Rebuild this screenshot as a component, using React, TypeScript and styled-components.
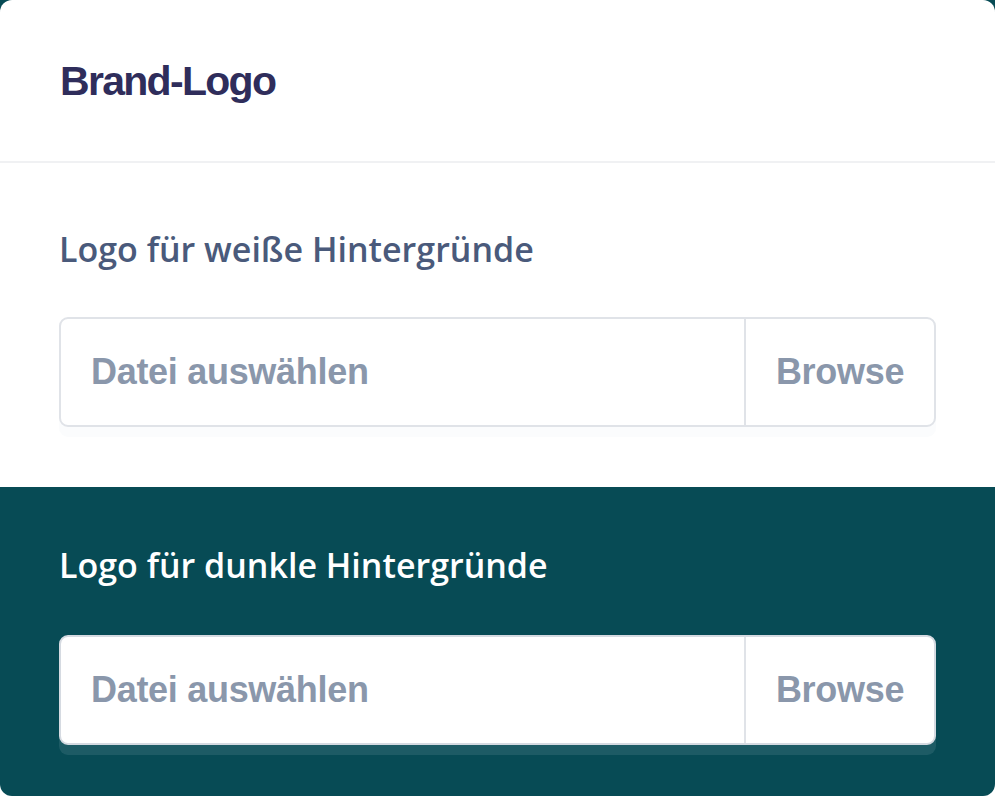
import React from 'react';
import styled, {createGlobalStyle} from "styled-components";

const GlobalStyle = createGlobalStyle`
  html, body {
    margin: 0;
    padding: 0;
  }

  body {
    background: linear-gradient(#074b55 50%, #ffffff 50%);
    min-height: 796px;
  }

  * {
    box-sizing: border-box;
  }
`

const Card = styled.div`
  width: 995px;
  height: 796px;
  border-radius: 12px;
  overflow: hidden;
  background-color: #ffffff;
  display: flex;
  flex-direction: column;
`

const Header = styled.header`
  height: 163px;
  padding-left: 60px;
  display: flex;
  align-items: center;
  border-bottom: 2px solid #f0f1f3;
`

const Title = styled.h1`
  margin: 0;
  padding-top: 2px;
  font-family: "Liberation Sans", Arial, sans-serif;
  font-weight: 700;
  font-size: 41px;
  letter-spacing: -1.7px;
  color: #2f2d5b;
`

const Section = styled.section<{ $dark?: boolean; $top: number; $bottom: number; $gap: number }>`
  display: flex;
  flex-direction: column;
  gap: ${p => p.$gap}px;
  padding: ${p => p.$top}px 59px ${p => p.$bottom}px 59px;
  background-color: ${p => p.$dark ? "#074b55" : "#ffffff"};
  flex: ${p => p.$dark ? 1 : "none"};
`

const Label = styled.div<{ $dark?: boolean }>`
  font-family: "Open Sans", "Noto Sans", sans-serif;
  font-weight: 600;
  font-size: 34px;
  line-height: 44px;
  color: ${p => p.$dark ? "#ffffff" : "#4a5a7b"};
`

const FileField = styled.div<{ $dark?: boolean }>`
  height: 110px;
  display: flex;
  background-color: #ffffff;
  border: 2px solid ${p => p.$dark ? "#d5dae1" : "#e0e3e8"};
  border-radius: 9px;
  box-shadow: 0 10px 0 rgba(190, 210, 220, ${p => p.$dark ? 0.12 : 0.06});
  font-family: "Liberation Sans", Arial, sans-serif;
  font-weight: 700;
  font-size: 36px;
  letter-spacing: -0.3px;
  color: #8a97ab;
`

const Placeholder = styled.div`
  flex: 1;
  display: flex;
  align-items: center;
  padding-left: 30px;
`

const BrowseButton = styled.div`
  width: 190px;
  display: flex;
  align-items: center;
  justify-content: center;
  border-left: 2px solid #e0e3e8;
`

type BlockProps = { label: string; dark?: boolean; top: number; bottom: number; gap: number };

const UploadBlock = ({label, dark, top, bottom, gap}: BlockProps) => (
    <Section $dark={dark} $top={top} $bottom={bottom} $gap={gap}>
        <Label $dark={dark}>{label}</Label>
        <FileField $dark={dark}>
            <Placeholder>Datei auswählen</Placeholder>
            <BrowseButton>Browse</BrowseButton>
        </FileField>
    </Section>
);

export default function App() {
    return (
        <>
            <GlobalStyle/>
            <Card>
                <Header>
                    <Title>Brand-Logo</Title>
                </Header>
                <UploadBlock label={"Logo für weiße Hintergründe"} top={64} gap={46} bottom={60}/>
                <UploadBlock label={"Logo für dunkle Hintergründe"} dark top={56} gap={48} bottom={51}/>
            </Card>
        </>
    );
}
